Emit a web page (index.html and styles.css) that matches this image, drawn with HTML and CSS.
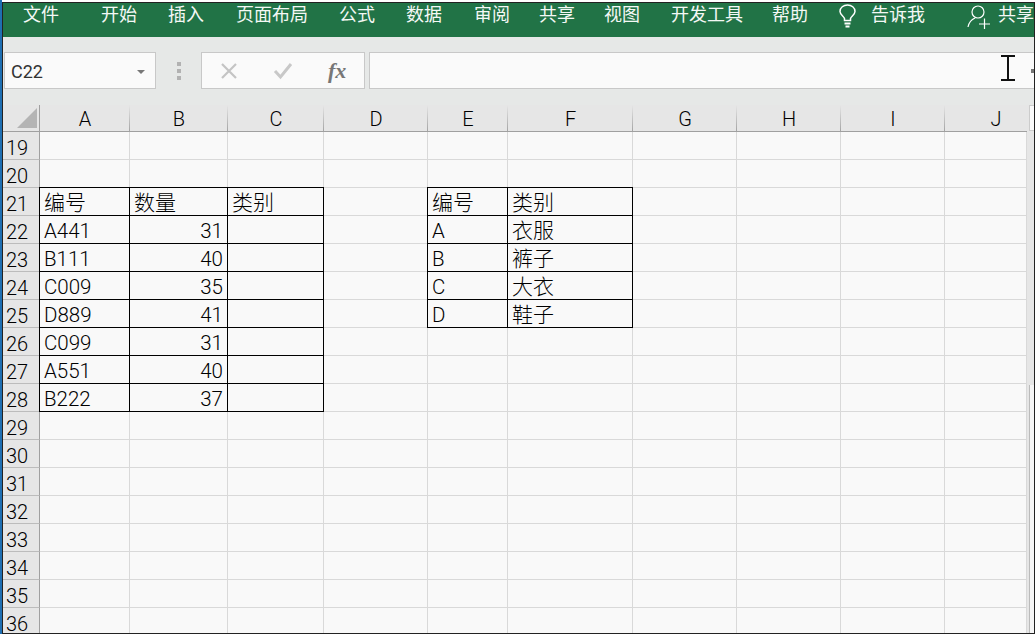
FILE: index.html
```html
<!DOCTYPE html>
<html lang="zh-CN">
<head>
<meta charset="utf-8">
<title>Excel</title>
<link rel="stylesheet" href="styles.css">
</head>
<body>
<div class="window">
<div class="app">
  <nav class="ribbon">
    <span class="tab first">文件</span>
    <span class="tab far">开始</span>
    <span class="tab">插入</span>
    <span class="tab wide">页面布局</span>
    <span class="tab">公式</span>
    <span class="tab">数据</span>
    <span class="tab wide">审阅</span>
    <span class="tab tight">共享</span>
    <span class="tab tight">视图</span>
    <span class="tab">开发工具</span>
    <span class="tab tight">帮助</span>
    <svg class="bulb" width="20" height="24" viewBox="0 0 20 24" fill="none" stroke="#fff" stroke-width="1.5"><path d="M6.5 16.5V14.5C6 12.5 2 10.500 2 7.500C2 3.500 5.500 1 9.500 1C13.500 1 17 3.500 17 7.500C17 10.500 13 12.500 12.500 14.500V16.500Z"/><path d="M6.500 19.500H12.500M7.500 22.500H11.500" stroke-width="2"/></svg>
    <span class="tab tell">告诉我</span>
    <svg class="person" width="24" height="24" viewBox="0 0 24 24" fill="none" stroke="#fff" stroke-width="1.2"><circle cx="11" cy="7" r="6"/><path d="M1 22C2 17 4.500 14.500 8 13M12 19H23M17.500 13.500V24"/></svg>
    <span class="tab share">共享</span>
  </nav>

  <section class="toolbar">
    <div class="box namebox"><span>C22</span><i class="arrow"></i></div>
    <div class="dots"><i></i><i></i><i></i></div>
    <div class="box actions">
      <svg width="18" height="18" viewBox="0 0 18 18" fill="none" stroke="#c4c4c4" stroke-width="2.200"><path d="M2 2L16 16M16 2L2 16"/></svg>
      <svg class="check" width="20" height="18" viewBox="0 0 20 18" fill="none" stroke="#c8c8c8" stroke-width="3"><path d="M2 9L7.500 15L18 2"/></svg>
      <span class="fx">fx</span>
    </div>
    <div class="box formula"><i class="more"></i></div>
  </section>

  <main class="workspace">
    <div class="sheet">
      <div class="corner"><svg width="20" height="20" viewBox="0 0 20 20"><path d="M0 20L20 0V20Z" fill="#b4b4b4"/></svg></div>
      <div class="ch">A</div><div class="ch">B</div><div class="ch">C</div><div class="ch">D</div><div class="ch">E</div><div class="ch">F</div><div class="ch">G</div><div class="ch">H</div><div class="ch">I</div><div class="ch last">J</div>

      <div class="rh">19</div><div class="c"></div><div class="c"></div><div class="c"></div><div class="c"></div><div class="c"></div><div class="c"></div><div class="c"></div><div class="c"></div><div class="c"></div><div class="c"></div>
      <div class="rh">20</div><div class="c"></div><div class="c"></div><div class="c"></div><div class="c"></div><div class="c"></div><div class="c"></div><div class="c"></div><div class="c"></div><div class="c"></div><div class="c"></div>
      <div class="rh">21</div><div class="c b h">编号</div><div class="c b h">数量</div><div class="c b h">类别</div><div class="c"></div><div class="c b h">编号</div><div class="c b h">类别</div><div class="c"></div><div class="c"></div><div class="c"></div><div class="c"></div>
      <div class="rh">22</div><div class="c b">A441</div><div class="c b n">31</div><div class="c b"></div><div class="c"></div><div class="c b">A</div><div class="c b h">衣服</div><div class="c"></div><div class="c"></div><div class="c"></div><div class="c"></div>
      <div class="rh">23</div><div class="c b">B111</div><div class="c b n">40</div><div class="c b"></div><div class="c"></div><div class="c b">B</div><div class="c b h">裤子</div><div class="c"></div><div class="c"></div><div class="c"></div><div class="c"></div>
      <div class="rh">24</div><div class="c b">C009</div><div class="c b n">35</div><div class="c b"></div><div class="c"></div><div class="c b">C</div><div class="c b h">大衣</div><div class="c"></div><div class="c"></div><div class="c"></div><div class="c"></div>
      <div class="rh">25</div><div class="c b">D889</div><div class="c b n">41</div><div class="c b"></div><div class="c"></div><div class="c b">D</div><div class="c b h">鞋子</div><div class="c"></div><div class="c"></div><div class="c"></div><div class="c"></div>
      <div class="rh">26</div><div class="c b">C099</div><div class="c b n">31</div><div class="c b"></div><div class="c"></div><div class="c"></div><div class="c"></div><div class="c"></div><div class="c"></div><div class="c"></div><div class="c"></div>
      <div class="rh">27</div><div class="c b">A551</div><div class="c b n">40</div><div class="c b"></div><div class="c"></div><div class="c"></div><div class="c"></div><div class="c"></div><div class="c"></div><div class="c"></div><div class="c"></div>
      <div class="rh">28</div><div class="c b">B222</div><div class="c b n">37</div><div class="c b"></div><div class="c"></div><div class="c"></div><div class="c"></div><div class="c"></div><div class="c"></div><div class="c"></div><div class="c"></div>
      <div class="rh">29</div><div class="c"></div><div class="c"></div><div class="c"></div><div class="c"></div><div class="c"></div><div class="c"></div><div class="c"></div><div class="c"></div><div class="c"></div><div class="c"></div>
      <div class="rh">30</div><div class="c"></div><div class="c"></div><div class="c"></div><div class="c"></div><div class="c"></div><div class="c"></div><div class="c"></div><div class="c"></div><div class="c"></div><div class="c"></div>
      <div class="rh">31</div><div class="c"></div><div class="c"></div><div class="c"></div><div class="c"></div><div class="c"></div><div class="c"></div><div class="c"></div><div class="c"></div><div class="c"></div><div class="c"></div>
      <div class="rh">32</div><div class="c"></div><div class="c"></div><div class="c"></div><div class="c"></div><div class="c"></div><div class="c"></div><div class="c"></div><div class="c"></div><div class="c"></div><div class="c"></div>
      <div class="rh">33</div><div class="c"></div><div class="c"></div><div class="c"></div><div class="c"></div><div class="c"></div><div class="c"></div><div class="c"></div><div class="c"></div><div class="c"></div><div class="c"></div>
      <div class="rh">34</div><div class="c"></div><div class="c"></div><div class="c"></div><div class="c"></div><div class="c"></div><div class="c"></div><div class="c"></div><div class="c"></div><div class="c"></div><div class="c"></div>
      <div class="rh">35</div><div class="c"></div><div class="c"></div><div class="c"></div><div class="c"></div><div class="c"></div><div class="c"></div><div class="c"></div><div class="c"></div><div class="c"></div><div class="c"></div>
      <div class="rh">36</div><div class="c"></div><div class="c"></div><div class="c"></div><div class="c"></div><div class="c"></div><div class="c"></div><div class="c"></div><div class="c"></div><div class="c"></div><div class="c"></div>
    </div>
    <aside class="vscroll"><div class="up"></div><div class="track"></div><div class="thumb"></div></aside>
  </main>

  <svg class="ibeam" width="16" height="26" viewBox="0 0 16 26" fill="none" stroke="#111" stroke-width="2"><path d="M1 1H15M8 1V25M1 25H15"/></svg>
</div>
</div>
</body>
</html>
```
FILE: styles.css
```css
* { box-sizing: border-box; }
html, body { margin: 0; padding: 0; }
body {
  width: 1036px;
  height: 634px;
  overflow: hidden;
  background: #fff;
  font-family: Roboto, "Noto Sans CJK SC", sans-serif;
  font-weight: 300;
  color: #000;
}
i { display: block; }

.window {
  width: 1036px;
  height: 634px;
  padding-top: 2px;
  border-left: 2px solid #1f6fb2;
}
.app {
  position: relative;
  width: 1033px;
  height: 632px;
  border: 1px solid #222;
  display: flex;
  flex-direction: column;
  background: #e6e8e7;
}

/* ribbon */
.ribbon {
  flex: none;
  height: 34px;
  background: #217346;
  color: #f4f8f5;
  display: flex;
  align-items: flex-start;
  font-size: 18px;
  line-height: 20px;
  font-family: "Noto Sans CJK SC", sans-serif;
  font-weight: 400;
  white-space: nowrap;
}
.tab { flex: none; margin-left: 31px; }
.tab.first { margin-left: 20px; }
.tab.far { margin-left: 42px; }
.tab.wide { margin-left: 32px; }
.tab.tight { margin-left: 29px; }
.bulb { flex: none; margin: 1px 0 0 30px; }
.tab.tell { margin-left: 13px; }
.person { flex: none; margin: 2px 0 0 42px; }
.tab.share { margin-left: -1px; transform: none; padding-left: 8px; width: 44px; overflow: visible; }

/* formula bar */
.toolbar {
  flex: none;
  height: 68px;
  display: flex;
  padding: 15px 0 16px 1px;
}
.box {
  height: 37px;
  background: #fafafa;
  border: 1px solid #c8c8c8;
  display: flex;
  align-items: center;
}
.namebox {
  width: 152px;
  padding: 2px 10px 0 6px;
  justify-content: space-between;
  font-size: 18px;
  font-weight: 400;
  color: #333;
}
.arrow {
  width: 0;
  height: 0;
  border-left: 4px solid transparent;
  border-right: 4px solid transparent;
  border-top: 4px solid #777;
}
.dots {
  width: 45px;
  display: flex;
  flex-direction: column;
  align-items: center;
  justify-content: center;
  gap: 3px;
}
.dots i { width: 4px; height: 4px; background: #b2b2b2; }
.actions {
  width: 164px;
  margin-right: 4px;
  padding-left: 18px;
}
.check { margin-left: 35px; }
.fx {
  margin-left: 35px;
  font-family: "Liberation Serif", serif;
  font-style: italic;
  font-weight: 700;
  font-size: 22px;
  color: #777;
}
.formula {
  flex: 1;
  border-right: 0;
  justify-content: flex-end;
}
.more { width: 3px; height: 4px; background: #777; }

/* sheet */
.workspace { flex: 1; display: flex; min-height: 0; overflow: hidden; }
.sheet {
  flex: none;
  width: 1024px;
  display: grid;
  grid-template-columns: 37px 90px 98px 96px 104px 80px 125px 104px 104px 104px 82px;
  grid-template-rows: 27px;
  grid-auto-rows: 28px;
  background: #f9f9f9;
  font-size: 20.500px;
  line-height: 27px;
}
.corner {
  background: #e6e6e6;
  border-bottom: 1px solid #a0a0a0;
  border-right: 1px solid #a0a0a0;
  padding: 3px 0 0 14px;
  line-height: 0;
}
.ch {
  background: #e6e6e6 linear-gradient(#e6e6e6, #a4a4a4) right top / 1px 100% no-repeat;
  border-bottom: 1px solid #a0a0a0;
  text-align: center;
  font-size: 20px;
  padding-top: 1px;
}
.ch.last { padding-left: 20px; background-image: none; }
.rh {
  background: #e6e6e6;
  border-right: 1px solid #a0a0a0;
  border-bottom: 1px solid #bcbcbc;
  padding: 3px 0 0 3px;
  font-size: 20px;
}
.c {
  border-right: 1px solid #d9d9d9;
  border-bottom: 1px solid #d9d9d9;
  padding: 2px 4px 0;
  white-space: nowrap;
  overflow: hidden;
}
.c.b {
  border-color: #000;
  box-shadow: -1px 0 0 #000, 0 -1px 0 #000, -1px -1px 0 #000;
  overflow: visible;
}
.c.h { font-size: 21px; }
.c.n { text-align: right; }

/* scroll strip */
.vscroll {
  flex: 1;
  display: flex;
  flex-direction: column;
  background: #e6e6e6;
}
.up {
  height: 26px;
  margin: 0 0 0 2px;
  background: #fafafa;
  border: 1px solid #ccc;
  border-right: 0;
}
.track { height: 254px; }
.thumb { flex: 1; margin-left: 2px; background: #f6f6f6; border-left: 1px solid #bbb; }

/* mouse pointer */
.ibeam { position: absolute; left: 997px; top: 52px; }
```
